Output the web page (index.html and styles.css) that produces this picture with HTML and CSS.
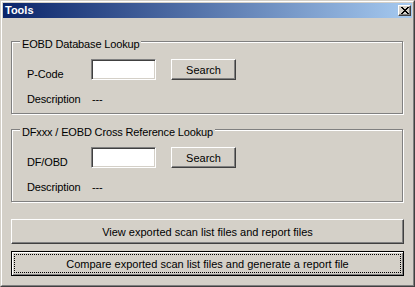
FILE: index.html
```html
<!DOCTYPE html>
<html lang="en">
<head>
  <meta charset="UTF-8">
  <title>Tools</title>
  <link rel="stylesheet" href="styles.css">
</head>
<body>
  <div class="window">
    <div class="window-inner">
      <div class="titlebar">
        <span class="title">Tools</span>
        <button class="caption-btn" title="Close">
          <svg width="8" height="7" viewBox="0 0 8 7" shape-rendering="crispEdges">
            <path d="M0 0h2v1h-2zM6 0h2v1h-2zM1 1h2v1h-2zM5 1h2v1h-2zM2 2h4v1h-4zM3 3h2v1h-2zM2 4h4v1h-4zM1 5h2v1h-2zM5 5h2v1h-2zM0 6h2v1h-2zM6 6h2v1h-2z" fill="#000"/>
          </svg>
        </button>
      </div>

      <div class="dialog">
        <fieldset class="group">
          <legend>EOBD Database Lookup</legend>
          <div class="field-row">
            <label class="field-label" for="pcode">P-Code</label>
            <input type="text" id="pcode" class="edit">
            <button class="btn btn-search">Search</button>
          </div>
          <div class="desc-row">
            <span class="field-label">Description</span>
            <span class="desc-value">---</span>
          </div>
        </fieldset>

        <fieldset class="group group-second">
          <legend>DFxxx / EOBD Cross Reference Lookup</legend>
          <div class="field-row">
            <label class="field-label" for="dfobd">DF/OBD</label>
            <input type="text" id="dfobd" class="edit">
            <button class="btn btn-search">Search</button>
          </div>
          <div class="desc-row">
            <span class="field-label">Description</span>
            <span class="desc-value">---</span>
          </div>
        </fieldset>

        <button class="btn btn-wide btn-view">View exported scan list files and report files</button>
        <button class="btn btn-wide btn-default">Compare exported scan list files and generate a report file</button>
      </div>
    </div>
  </div>
</body>
</html>
```

FILE: styles.css
```css
* {
  box-sizing: border-box;
}
body {
  margin: 0;
  font-family: "Liberation Sans", Arial, sans-serif;
  font-size: 11px;
  letter-spacing: -0.15px;
  color: #000;
  background-color: #d4d0c8;
}
.window {
  width: 415px;
  height: 287px;
  background-color: #d4d0c8;
  border: 1px solid;
  border-color: #d4d0c8 #404040 #404040 #d4d0c8;
}
.window-inner {
  height: 100%;
  padding: 1px;
  border: 1px solid;
  border-color: #fff #808080 #808080 #fff;
}
.titlebar {
  height: 15px;
  display: flex;
  align-items: center;
  justify-content: space-between;
  padding: 0 1px 0 2px;
  background: linear-gradient(to right, #0a246a, #a6caf0);
}
.title {
  color: #fff;
  font-weight: bold;
  letter-spacing: 0;
  line-height: 13px;
}
.caption-btn {
  width: 13px;
  height: 11px;
  padding: 0;
  display: flex;
  align-items: center;
  justify-content: center;
  background-color: #d4d0c8;
  border: 1px solid;
  border-color: #fff #404040 #404040 #fff;
  box-shadow: inset -1px -1px #808080;
}
.dialog {
  display: flex;
  flex-direction: column;
  padding: 0 8px;
}
.group {
  margin: 14px 1px 0 0;
  padding: 8px 0 7px 15px;
  border: 1px solid #808080;
  box-shadow: inset 1px 1px #fff, 1px 1px #fff;
  min-width: 0;
}
.group-second {
  margin-top: 6px;
}
.group legend {
  margin-left: -7px;
  padding: 6px 2px 0 2px;
  line-height: 13px;
  background-color: #d4d0c8;
}
.field-row {
  display: flex;
  align-items: flex-end;
  height: 21px;
}
.field-label {
  width: 64px;
  line-height: 13px;
  margin-bottom: -1px;
}
.edit {
  width: 65px;
  height: 21px;
  margin: 0;
  padding: 1px 3px;
  font: inherit;
  background-color: #fff;
  border: 1px solid;
  border-color: #808080 #fff #fff #808080;
  box-shadow: inset 1px 1px #404040, inset -1px -1px #d4d0c8;
  outline: none;
}
.btn {
  margin: 0;
  padding: 0;
  font: inherit;
  color: #000;
  background-color: #d4d0c8;
  border: 1px solid;
  border-color: #fff #404040 #404040 #fff;
  box-shadow: inset -1px -1px #808080;
  cursor: pointer;
}
.btn-search {
  width: 65px;
  height: 21px;
  margin-left: 15px;
  align-self: flex-start;
}
.desc-row {
  display: flex;
  margin-top: 13px;
  line-height: 13px;
}
.desc-value {
  padding-left: 1px;
}
.btn-wide {
  width: 393px;
  height: 25px;
}
.btn-view {
  margin-top: 17px;
}
.btn-default {
  margin-top: 7px;
  border: 1px solid #000;
  box-shadow: inset 1px 1px #fff, inset -1px -1px #808080;
  outline: 1px dotted #000;
  outline-offset: -4px;
}
```
